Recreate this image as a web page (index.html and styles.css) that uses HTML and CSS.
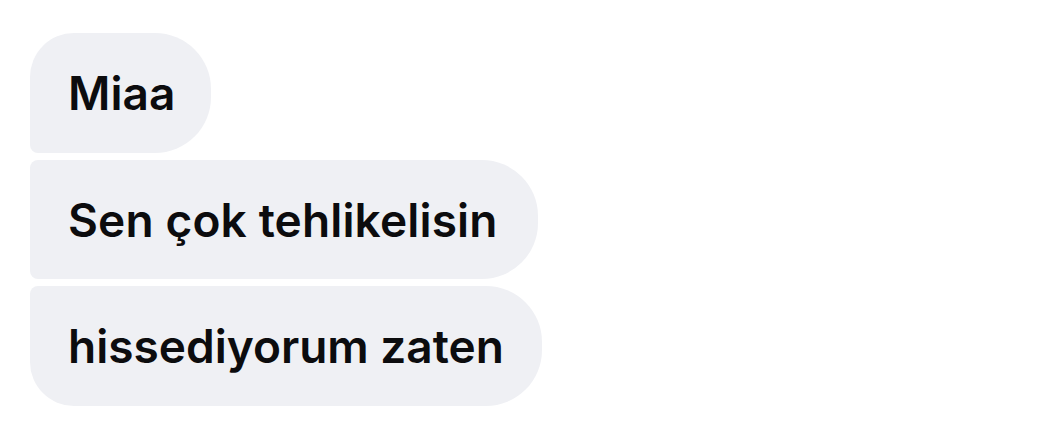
FILE: index.html
```html
<!DOCTYPE html>
<html lang="tr">
<head>
<meta charset="utf-8">
<link rel="stylesheet" href="styles.css">
</head>
<body>
<div class="thread">
  <div class="bubble first">Miaa</div>
  <div class="bubble middle">Sen çok tehlikelisin</div>
  <div class="bubble last">hissediyorum zaten</div>
</div>
</body>
</html>
```
FILE: styles.css
```css
html, body {
  margin: 0;
  padding: 0;
  background: #ffffff;
}
.thread {
  display: flex;
  flex-direction: column;
  align-items: flex-start;
  gap: 7px;
  padding: 33px 0 0 30px;
}
.bubble {
  box-sizing: border-box;
  height: 120px;
  display: flex;
  align-items: center;
  padding: 0 38px 0 38px;
  background: #eff0f4;
  color: #0c0c0e;
  font-family: Inter, "Noto Sans", sans-serif;
  font-weight: 600;
  font-size: 46px;
  white-space: nowrap;
}
.first {
  padding-right: 36px;
  border-radius: 44px 56px 56px 8px;
}
.middle {
  height: 119px;
  padding-right: 40px;
  letter-spacing: 0.15px;
  border-radius: 8px 56px 56px 8px;
}
.last {
  border-radius: 8px 56px 56px 44px;
}
```
